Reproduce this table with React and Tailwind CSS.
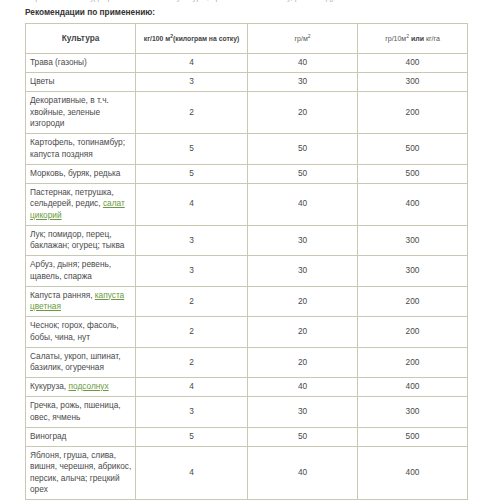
import React from "react";

const L = ({ children }) => (
  <a href="#" className="text-[#6b9a3c] underline">{children}</a>
);

const rows = [
  [<>Трава (газоны)</>, 4, 40, 400],
  [<>Цветы</>, 3, 30, 300],
  [<>Декоративные, в т.ч.<br />хвойные, зеленые<br />изгороди</>, 2, 20, 200],
  [<>Картофель, топинамбур;<br />капуста поздняя</>, 5, 50, 500],
  [<>Морковь, буряк, редька</>, 5, 50, 500],
  [<>Пастернак, петрушка,<br />сельдерей, редис, <L>салат<br />цикорий</L></>, 4, 40, 400],
  [<>Лук; помидор, перец,<br />баклажан; огурец; тыква</>, 3, 30, 300],
  [<>Арбуз, дыня; ревень,<br />щавель, спаржа</>, 3, 30, 300],
  [<>Капуста ранняя, <L>капуста<br />цветная</L></>, 2, 20, 200],
  [<>Чеснок; горох, фасоль,<br />бобы, чина, нут</>, 2, 20, 200],
  [<>Салаты, укроп, шпинат,<br />базилик, огуречная</>, 2, 20, 200],
  [<>Кукуруза, <L>подсолнух</L></>, 4, 40, 400],
  [<>Гречка, рожь, пшеница,<br />овес, ячмень</>, 3, 30, 300],
  [<>Виноград</>, 5, 50, 500],
  [<>Яблоня, груша, слива,<br />вишня, черешня, абрикос,<br />персик, алыча; грецкий<br />орех</>, 4, 40, 400],
];

export default function App() {
  return (
    <div
      className="w-[500px] h-[500px] overflow-hidden bg-white text-[#4a4a4a]"
      style={{ fontFamily: '"Liberation Sans", Arial, sans-serif' }}
    >
      <div className="pl-[25px]">
        <div className="h-[3px] overflow-hidden">
          <p className="-mt-[8px] text-[8px] leading-[11.5px] text-[#b0b0b0] whitespace-nowrap">
            Нормы внесения удобрения зависят от культуры, при внесении в почву, рекомендуем
          </p>
        </div>
        <h3 className="mt-[4px] text-[8.3px] leading-[11.5px] font-bold text-[#333]">
          Рекомендации по применению:
        </h3>
        <table className="mt-[4.5px] table-fixed border-collapse text-[8.3px] leading-[11.5px]">
          <colgroup>
            <col className="w-[110px]" />
            <col className="w-[112px]" />
            <col className="w-[110px]" />
            <col className="w-[110px]" />
          </colgroup>
          <thead>
            <tr className="h-[30px]">
              <th className="border border-[#c9c9b3] text-center font-bold text-[8.3px] text-[#444]">Культура</th>
              <th className="border border-[#c9c9b3] text-center font-bold text-[6.8px] text-[#444] whitespace-nowrap">
                кг/100 м<sup className="text-[5px]">2</sup>(килограм на сотку)
              </th>
              <th className="border border-[#c9c9b3] text-center font-normal text-[7px] text-[#555]">
                гр/м<sup className="text-[5px]">2</sup>
              </th>
              <th className="border border-[#c9c9b3] text-center font-normal text-[7px] text-[#555] whitespace-nowrap">
                гр/10м<sup className="text-[5px]">2</sup> <b className="font-bold text-[#444]">или</b> кг/га
              </th>
            </tr>
          </thead>
          <tbody>
            {rows.map((r, i) => (
              <tr key={i}>
                <td className="border border-[#c9c9b3] pl-[4px] pr-[1px] pt-[3px] pb-[3.5px] align-middle whitespace-nowrap">{r[0]}</td>
                <td className="border border-[#c9c9b3] text-center align-middle">{r[1]}</td>
                <td className="border border-[#c9c9b3] text-center align-middle">{r[2]}</td>
                <td className="border border-[#c9c9b3] text-center align-middle">{r[3]}</td>
              </tr>
            ))}
          </tbody>
        </table>
      </div>
    </div>
  );
}
